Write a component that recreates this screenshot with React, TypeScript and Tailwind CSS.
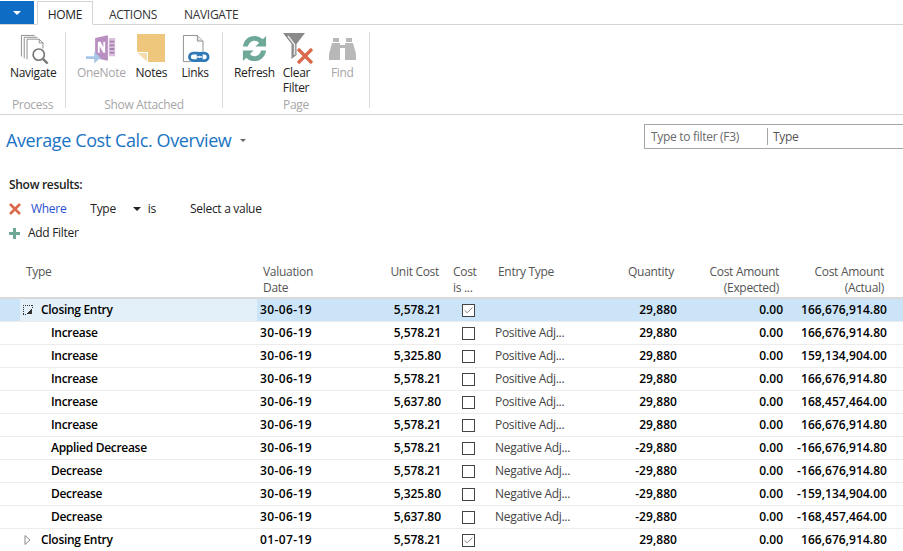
import { Check } from 'lucide-react'

const font = "font-['Open_Sans',sans-serif]"
const cols = 'grid grid-cols-[257px_95px_89px_54px_100px_82px_106px_104px_16px]'

interface Row {
  type: string
  indent?: boolean
  date: string
  unit: string
  cost: boolean
  entry: string
  qty: string
  exp: string
  act: string
  state?: 'selected' | 'closed'
}

const rows: Row[] = [
  { type: 'Closing Entry', date: '30-06-19', unit: '5,578.21', cost: true, entry: '', qty: '29,880', exp: '0.00', act: '166,676,914.80', state: 'selected' },
  { type: 'Increase', indent: true, date: '30-06-19', unit: '5,578.21', cost: false, entry: 'Positive Adj...', qty: '29,880', exp: '0.00', act: '166,676,914.80' },
  { type: 'Increase', indent: true, date: '30-06-19', unit: '5,325.80', cost: false, entry: 'Positive Adj...', qty: '29,880', exp: '0.00', act: '159,134,904.00' },
  { type: 'Increase', indent: true, date: '30-06-19', unit: '5,578.21', cost: false, entry: 'Positive Adj...', qty: '29,880', exp: '0.00', act: '166,676,914.80' },
  { type: 'Increase', indent: true, date: '30-06-19', unit: '5,637.80', cost: false, entry: 'Positive Adj...', qty: '29,880', exp: '0.00', act: '168,457,464.00' },
  { type: 'Increase', indent: true, date: '30-06-19', unit: '5,578.21', cost: false, entry: 'Positive Adj...', qty: '29,880', exp: '0.00', act: '166,676,914.80' },
  { type: 'Applied Decrease', indent: true, date: '30-06-19', unit: '5,578.21', cost: false, entry: 'Negative Adj...', qty: '-29,880', exp: '0.00', act: '-166,676,914.80' },
  { type: 'Decrease', indent: true, date: '30-06-19', unit: '5,578.21', cost: false, entry: 'Negative Adj...', qty: '-29,880', exp: '0.00', act: '-166,676,914.80' },
  { type: 'Decrease', indent: true, date: '30-06-19', unit: '5,325.80', cost: false, entry: 'Negative Adj...', qty: '-29,880', exp: '0.00', act: '-159,134,904.00' },
  { type: 'Decrease', indent: true, date: '30-06-19', unit: '5,637.80', cost: false, entry: 'Negative Adj...', qty: '-29,880', exp: '0.00', act: '-168,457,464.00' },
  { type: 'Closing Entry', date: '01-07-19', unit: '5,578.21', cost: true, entry: '', qty: '29,880', exp: '0.00', act: '166,676,914.80', state: 'closed' },
]

function NavigateIcon() {
  return (
    <svg className="ml-[3px]" width="30" height="30" viewBox="0 0 32 32" fill="none" stroke="#8a8a8a" strokeWidth="1">
      <path d="M1.5 24V1.5h14" />
      <path d="M4.5 26V3.5h14" />
      <path d="M7.5 27V5.5h13l4 4v6" fill="#fff" />
      <path d="M20.5 5.5v4h4" />
      <circle cx="20" cy="22" r="6" fill="#fff" stroke="#777" strokeWidth="1.8" />
      <path d="M24.5 26.5l5 5" stroke="#777" strokeWidth="2.6" />
    </svg>
  )
}

function OneNoteIcon() {
  return (
    <svg width="31" height="30" viewBox="0 0 34 32">
      <path d="M10 4l14-3v28l-14-3z" fill="#b88fc0" />
      <path d="M25 4h7v20h-7z" fill="#d9c0dd" />
      <path d="M26 8h5M26 12h5M26 16h5M26 20h5" stroke="#a77fb0" strokeWidth="2" />
      <path d="M13 8h3l3 6V8h2v12h-2l-4-7v7h-2z" fill="#fff" />
      <path d="M0 25h9v-5l7 6.5-7 6.500v-5H0z" fill="#a9c8e8" transform="translate(0 -1)" />
    </svg>
  )
}

function NotesIcon() {
  return (
    <svg width="29" height="29" viewBox="0 0 29 29">
      <path d="M0 0h28v28H11L0 17z" fill="#eec67c" />
      <path d="M0 18.500h10.500V28" fill="#f4dcae" stroke="#fff" strokeWidth="1" />
    </svg>
  )
}

function LinksIcon() {
  return (
    <svg className="ml-[2px]" width="28" height="30" viewBox="0 0 30 32" fill="none">
      <path d="M9 29.500H1.500V1.500h15l6 6v11" stroke="#8a8a8a" />
      <path d="M16.500 1.500v6h6" stroke="#8a8a8a" fill="#e6e6e6" />
      <rect x="8" y="20.500" width="13" height="8" rx="4" stroke="#2f78b8" strokeWidth="3" />
      <rect x="17" y="20.500" width="11" height="8" rx="4" stroke="#2f78b8" strokeWidth="3" />
      <path d="M15 24.500h7" stroke="#fff" strokeWidth="1.500" />
    </svg>
  )
}

function RefreshIcon() {
  return (
    <svg width="27" height="27" viewBox="0 0 28 28" fill="#6ea898">
      <path d="M2 12C3 5 8 1 14 1c3.500 0 6.500 1.300 8.500 3.500L26 1v11H15l3.700-3.700C17.500 6.800 16 6 14 6c-3.500 0-6 2.500-6.800 6z" />
      <path d="M26 16c-1 7-6 11-12 11-3.500 0-6.500-1.300-8.500-3.500L2 27V16h11l-3.700 3.700C10.500 21.200 12 22 14 22c3.500 0 6-2.500 6.800-6z" />
    </svg>
  )
}

function ClearFilterIcon() {
  return (
    <svg width="33" height="32" viewBox="0 0 33 32" fill="none">
      <path d="M0 0h22L13.500 11v11l-5 4V11z" fill="#8a8a8a" />
      <path d="M5 3l6.500 8.500V22" stroke="#e8e8e8" strokeWidth="1.500" />
      <path d="M15 16l14 14M29 16L15 30" stroke="#d9694a" strokeWidth="3.200" />
    </svg>
  )
}

function FindIcon() {
  return (
    <svg width="27" height="26" viewBox="0 0 27 26" fill="#b8b8b8">
      <path d="M4 2h6v4H4zM17 2h6v4h-6z" />
      <path d="M3 7h8v2h5V7h8l3 11v6H16V12h-5v12H0v-6z" />
    </svg>
  )
}

function RibbonButton({ label, icon, muted }: { label: string; icon: React.ReactNode; muted?: boolean }) {
  return (
    <div className="flex flex-col items-center">
      <div className="h-[33px] flex items-center justify-center">{icon}</div>
      <div className={`text-center leading-[15px] ${muted ? 'text-[#a6a6a6]' : 'text-[#222]'}`}>{label}</div>
    </div>
  )
}

function Group({ width, label, pad, children }: { width: string; label: string; pad: string; children: React.ReactNode }) {
  return (
    <div className={`${width} h-[76px] border-r border-[#d9d9d9]`}>
      <div className={`flex h-[65px] ${pad}`}>{children}</div>
      <div className="text-center text-[#a6a6a6] leading-[15px]">{label}</div>
    </div>
  )
}

export default function App() {
  return (
    <div className={`${font} w-[903px] h-[551px] overflow-hidden bg-white text-[12px] tracking-[-0.3px] text-black`}>
      {/* Tabs */}
      <div className="h-[25px] pt-[1px] flex border-b border-[#d4d4d4]">
        <div className="w-[34px] h-[23px] bg-[#0f6cc4] flex items-center justify-center">
          <div className="w-0 h-0 border-x-[4px] border-x-transparent border-t-[4px] border-t-white" />
        </div>
        <div className="ml-[3px] w-[56px] h-[24px] pt-[3px] border border-b-white border-[#d4d4d4] bg-white flex items-center justify-center text-[#222]">HOME</div>
        <div className="ml-[16px] h-[24px] pt-[4px] flex items-center text-[#333]">ACTIONS</div>
        <div className="ml-[27px] h-[24px] pt-[4px] flex items-center text-[#333]">NAVIGATE</div>
      </div>

      {/* Ribbon */}
      <div className="h-[90px] pt-[7px] flex border-b border-[#d4d4d4]">
        <Group width="w-[66px]" label="Process" pad="pl-[10px]">
          <RibbonButton label="Navigate" icon={<NavigateIcon />} />
        </Group>
        <Group width="w-[157px]" label="Show Attached" pad="pl-[11px] gap-[10px]">
          <RibbonButton label="OneNote" icon={<OneNoteIcon />} muted />
          <RibbonButton label="Notes" icon={<NotesIcon />} />
          <div className="ml-[3px]">
            <RibbonButton label="Links" icon={<LinksIcon />} />
          </div>
        </Group>
        <Group width="w-[147px]" label="Page" pad="pl-[11px] gap-[8px]">
          <RibbonButton label="Refresh" icon={<RefreshIcon />} />
          <div className="w-[33px]">
            <div className="h-[33px] flex items-center">
              <ClearFilterIcon />
            </div>
            <div className="w-[30px] leading-[15px] text-[#222]">Clear Filter</div>
          </div>
          <div className="ml-[5px]">
            <RibbonButton label="Find" icon={<FindIcon />} muted />
          </div>
        </Group>
      </div>

      {/* Title and search */}
      <div className="h-[53px] flex items-center justify-between">
        <div className="pl-[6px] -mt-[2px] flex items-center gap-[9px]">
          <span className="text-[18px] tracking-[-0.4px] text-[#1a74c4]">Average Cost Calc. Overview</span>
          <span className="w-0 h-0 border-x-[3px] border-x-transparent border-t-[3px] border-t-[#666]" />
        </div>
        <div className="w-[259px] h-[25px] -mt-[10px] border border-r-0 border-[#a6a6a6] flex items-center">
          <span className="pl-[6px] w-[122px] text-[#6a6a6a]">Type to filter (F3)</span>
          <span className="border-l border-[#a6a6a6] pl-[5px] h-[17px] leading-[18px] text-[#555]">Type</span>
        </div>
      </div>

      {/* Filter */}
      <div className="h-[96px] pl-[9px] pt-[9px]">
        <div className="font-semibold text-[#222] leading-[16px]">Show results:</div>
        <div className="mt-[8px] flex items-center h-[16px] leading-[16px]">
          <svg width="12" height="12" viewBox="0 0 12 12">
            <path d="M1 1l10 10M11 1L1 11" stroke="#d9694a" strokeWidth="2.600" />
          </svg>
          <span className="ml-[10px] text-[#2a4fd0]">Where</span>
          <span className="ml-[24px] text-[#222]">Type</span>
          <span className="ml-[17px] w-0 h-0 border-x-[4px] border-x-transparent border-t-[4px] border-t-[#222]" />
          <span className="ml-[7px] text-[#222]">is</span>
          <span className="ml-[34px] text-[#222]">Select a value</span>
        </div>
        <div className="mt-[8px] flex items-center h-[16px] leading-[16px]">
          <svg width="11" height="11" viewBox="0 0 11 11">
            <path d="M5.500 0v11M0 5.500h11" stroke="#6ea898" strokeWidth="3" />
          </svg>
          <span className="ml-[8px] text-[#222]">Add Filter</span>
        </div>
      </div>

      {/* Grid header */}
      <div className={`${cols} h-[35px] border-b-2 border-[#d9d9d9] text-[#555] leading-[16px]`}>
        <div className="pl-[26px]">Type</div>
        <div className="pl-[6px]">Valuation<br />Date</div>
        <div className="text-right pr-[2px]">Unit Cost</div>
        <div className="pl-[12px]">Cost<br />is ...</div>
        <div className="pl-[3px]">Entry Type</div>
        <div className="text-right pr-[3px]">Quantity</div>
        <div className="text-right pr-[4px]">Cost Amount<br />(Expected)</div>
        <div className="text-right pr-[3px]">Cost Amount<br />(Actual)</div>
      </div>

      {/* Grid rows */}
      {rows.map((row, i) => (
        <div
          key={i}
          className={`${cols} h-[23px] items-center border-b border-[#ececec] font-semibold text-black ${row.state === 'selected' ? 'bg-[#cce4f7]' : ''}`}
        >
          <div className={`h-full flex items-center ${row.state === 'selected' ? 'ml-[20px] bg-[#e3f0fa]' : 'ml-[20px]'} ${row.indent ? 'pl-[31px]' : ''}`}>
            {row.state === 'selected' && (
              <svg className="ml-[3px] mr-[8px]" width="10" height="10" viewBox="0 0 10 10" shapeRendering="crispEdges">
                <path d="M0 0.500h10M0.500 0v10M0 9.500h3M9.500 0v3" fill="none" stroke="#333" strokeDasharray="1 1" />
                <path d="M9 3v6H3z" fill="#333" />
              </svg>
            )}
            {row.state === 'closed' && (
              <svg className="ml-[4px] mr-[10px]" width="7" height="10" viewBox="0 0 7 10">
                <path d="M1 0.500v9l5-4.500z" fill="#fff" stroke="#888" />
              </svg>
            )}
            {row.type}
          </div>
          <div className="pl-[3px] tracking-[0.4px]">{row.date}</div>
          <div className="text-right tracking-[-0.05px]">{row.unit}</div>
          <div className="flex justify-center">
            <span className="w-[13px] h-[13px] border border-[#444] bg-white flex items-center justify-center">
              {row.cost && <Check size={11} strokeWidth={1.6} className="text-[#555]" />}
            </span>
          </div>
          <div className="font-normal text-[#444] truncate">{row.entry}</div>
          <div className="text-right tracking-[0.05px]">{row.qty}</div>
          <div className="text-right tracking-[0px]">{row.exp}</div>
          <div className="text-right tracking-[0.05px]">{row.act}</div>
        </div>
      ))}
    </div>
  )
}
